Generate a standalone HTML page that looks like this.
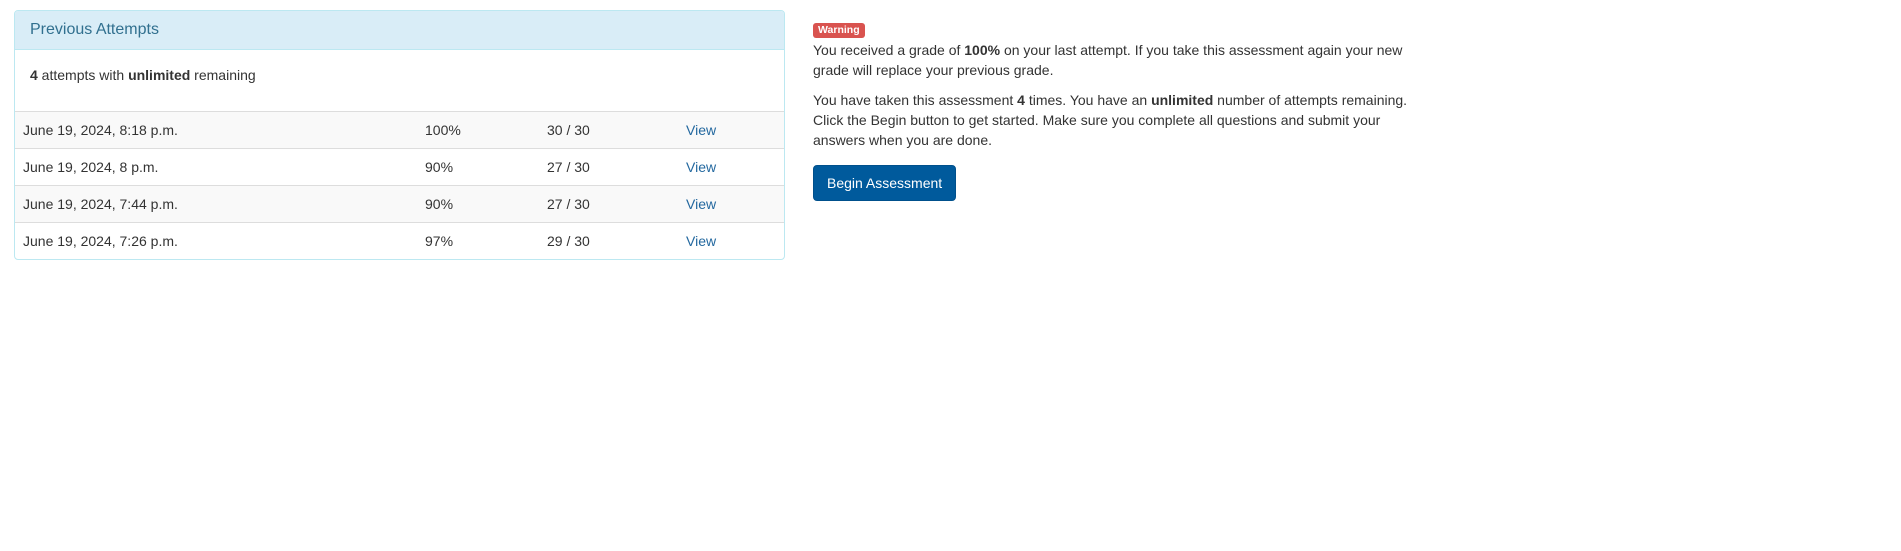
<!DOCTYPE html>
<html><head><meta charset="utf-8"><style>
body{margin:0;width:1901px;height:551px;background:#fff;font-family:"Liberation Sans",Arial,sans-serif;font-size:14px;line-height:20px;color:#333;position:relative}
.panel{position:absolute;left:14px;top:10px;width:769px;border:1px solid #bce8f1;border-radius:4px;overflow:hidden}
.ph{background:#d9edf7;color:#31708f;font-size:16px;height:38px;line-height:38px;padding:0 15px;border-bottom:1px solid #bce8f1}
.pb{padding:15px 15px 26px}
table{width:100%;border-collapse:collapse}
td{padding:8px 8px;border-top:1px solid #ddd;height:20px}
tr:nth-child(odd) td{background:#f9f9f9}
a{color:#23689f;text-decoration:none}
.right{position:absolute;left:813px;top:22px;width:600px}
.badge{display:inline-block;background:#d9534f;color:#fff;font-size:10.5px;font-weight:bold;line-height:15px;padding:0 5px;border-radius:3px;vertical-align:top;margin-top:1px}
p{margin:0 0 10px}
.btn{display:inline-block;margin-top:5px;background:#005a9c;color:#fff;border-radius:4px;padding:7px 13px;font-size:14px;line-height:20px;border:1px solid #00508c}
</style></head><body>
<div class="panel">
<div class="ph">Previous Attempts</div>
<div class="pb"><b>4</b> attempts with <b>unlimited</b> remaining</div>
<table>
<tr><td style="width:386px">June 19, 2024, 8:18 p.m.</td><td style="width:106px">100%</td><td style="width:123px">30 / 30</td><td><a>View</a></td></tr>
<tr><td>June 19, 2024, 8 p.m.</td><td>90%</td><td>27 / 30</td><td><a>View</a></td></tr>
<tr><td>June 19, 2024, 7:44 p.m.</td><td>90%</td><td>27 / 30</td><td><a>View</a></td></tr>
<tr><td>June 19, 2024, 7:26 p.m.</td><td>97%</td><td>29 / 30</td><td><a>View</a></td></tr>
</table>
</div>
<div class="right">
<div style="height:18px"><span class="badge">Warning</span></div>
<p>You received a grade of <b>100%</b> on your last attempt. If you take this assessment again your new grade will replace your previous grade.</p>
<p>You have taken this assessment <b>4</b> times. You have an <b>unlimited</b> number of attempts remaining. Click the Begin button to get started. Make sure you complete all questions and submit your answers when you are done.</p>
<span class="btn">Begin Assessment</span>
</div>
</body></html>
